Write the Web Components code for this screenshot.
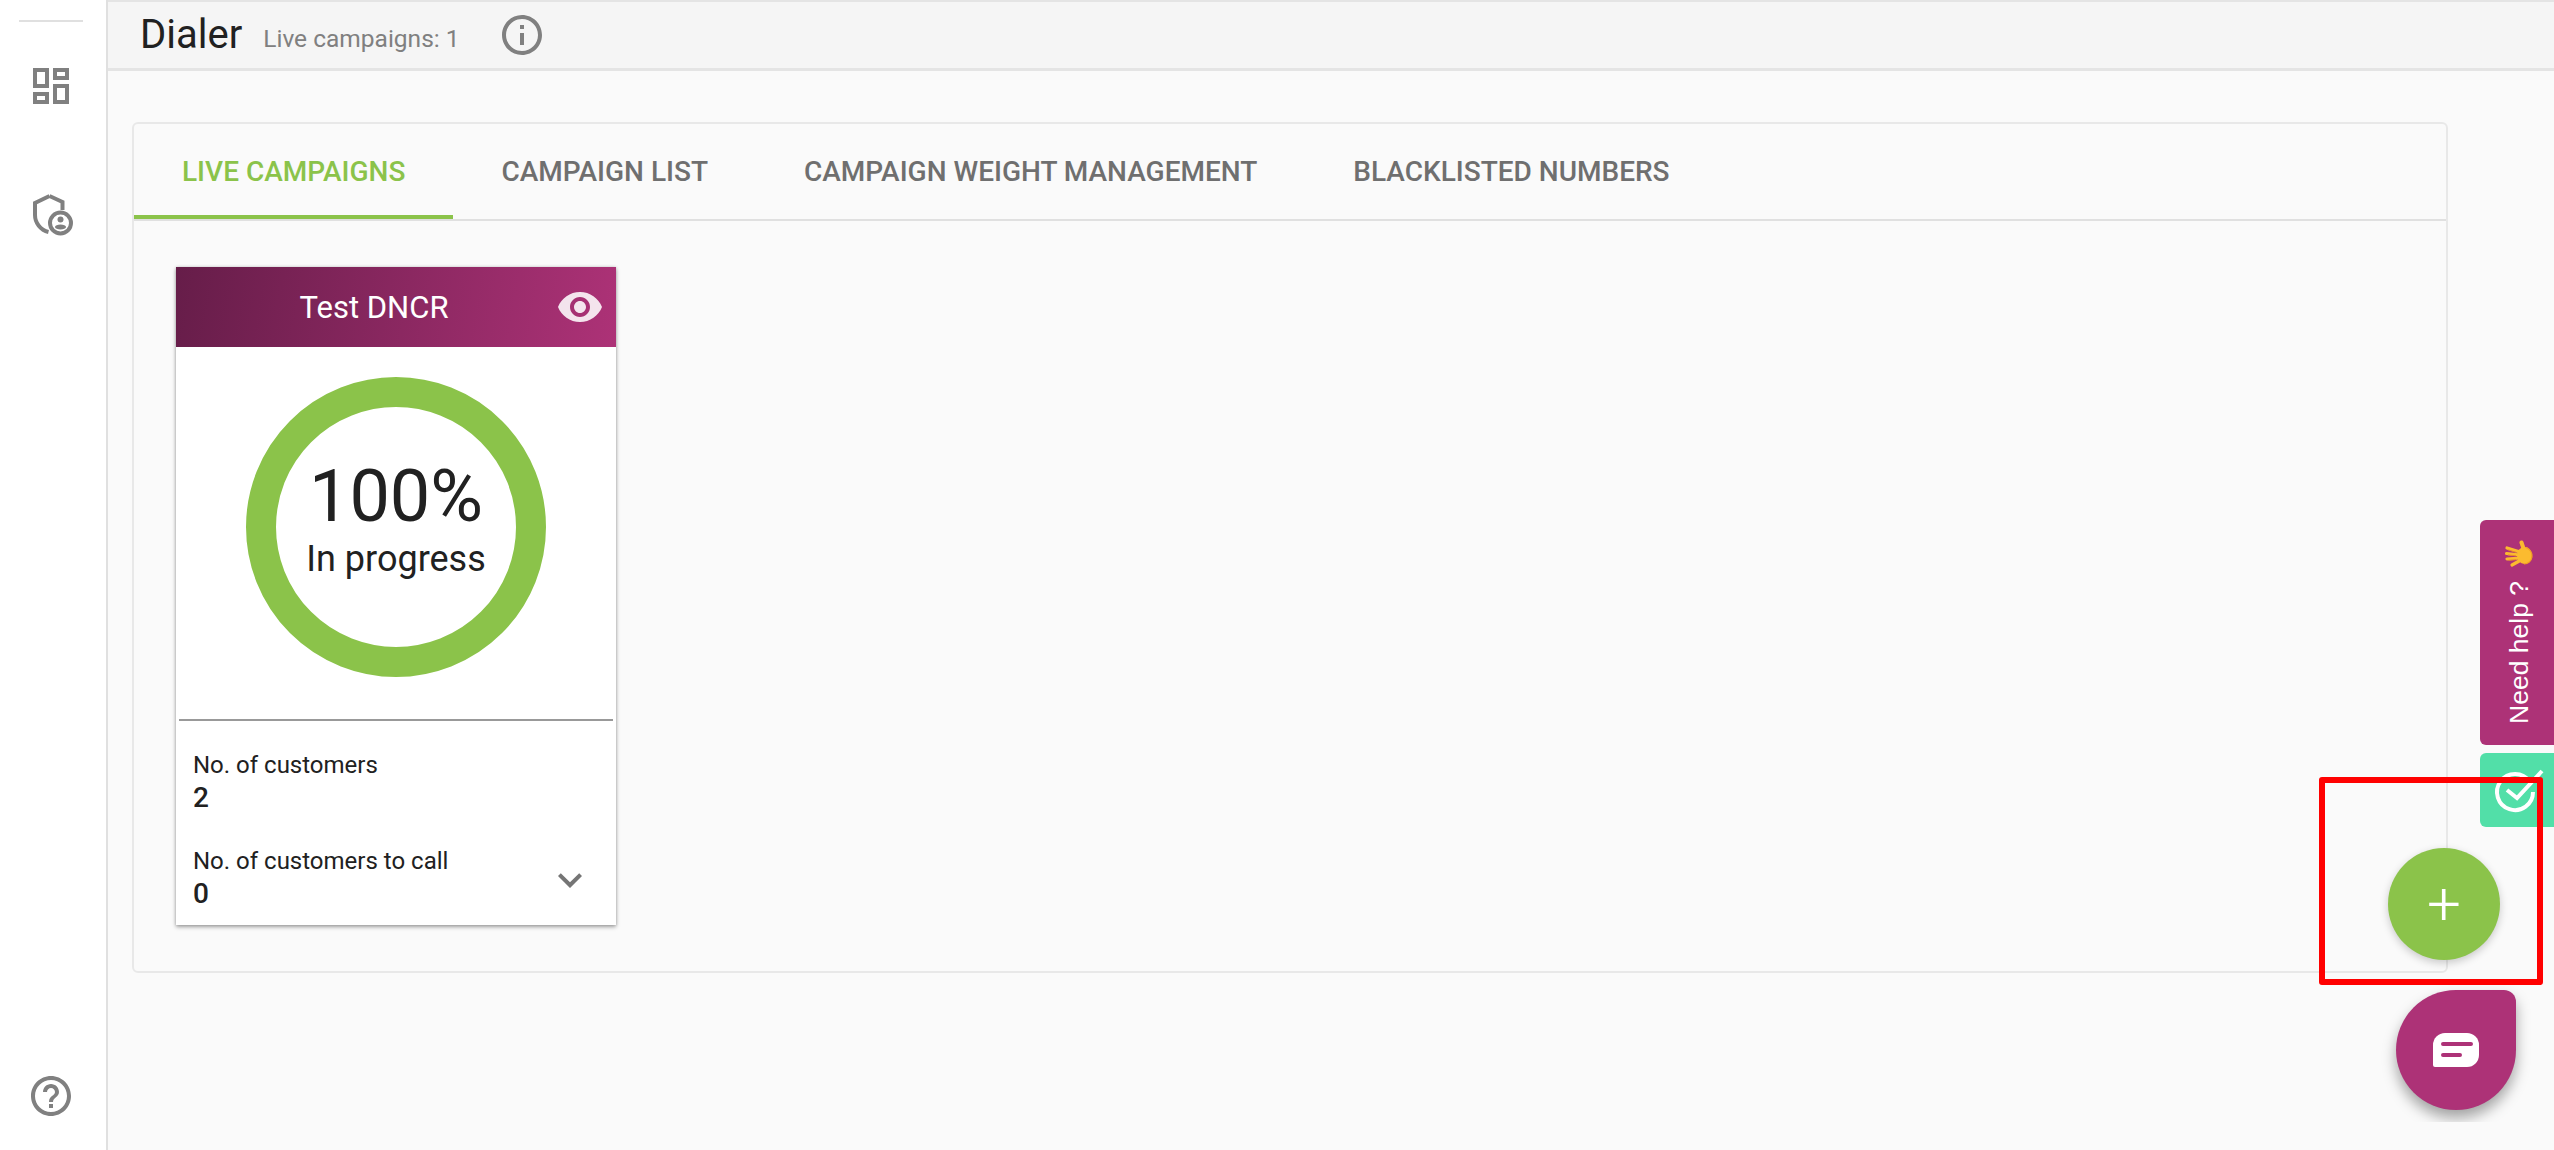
<!DOCTYPE html>
<html>
<head>
<meta charset="utf-8">
<title>Dialer</title>
<style>
  html, body { margin: 0; height: 100%; overflow: hidden; background: #fafafa; font-family: Roboto, sans-serif; color: #212121; }
  body { display: flex; width: 2554px; height: 1150px; }
  .main { flex: 1; display: flex; flex-direction: column; min-width: 0; }
</style>
</head>
<body>
<side-nav></side-nav>
<div class="main">
  <page-header title="Dialer" sub="Live campaigns: 1"></page-header>
  <tab-panel>
    <tab-item slot="title" selected>LIVE CAMPAIGNS</tab-item>
    <tab-item slot="title">CAMPAIGN LIST</tab-item>
    <tab-item slot="title">CAMPAIGN WEIGHT MANAGEMENT</tab-item>
    <tab-item slot="title">BLACKLISTED NUMBERS</tab-item>
    <campaign-card name="Test DNCR" percent="100%" status="In progress">
      <card-stat label="No. of customers" value="2"></card-stat>
      <card-stat label="No. of customers to call" value="0" expandable></card-stat>
    </campaign-card>
  </tab-panel>
</div>
<help-tabs></help-tabs>
<mark-box></mark-box>
<add-fab></add-fab>
<chat-bubble></chat-bubble>

<script>
(function() {
  'use strict';

  customElements.define('side-nav', class extends HTMLElement {
    constructor() {
      super();
      this.attachShadow({mode: 'open'}).innerHTML = `
        <style>
          :host { display: flex; flex-direction: column; align-items: center; box-sizing: border-box; width: 108px; height: 1150px; padding: 20px 4px 0 0; background: #fff; border-right: 2px solid #e0e0e0; flex: none; }
          hr { width: 64px; height: 2px; margin: 0; border: 0; background: #e0e0e0; }
          svg { display: block; width: 48px; height: 48px; fill: #808080; }
          .dash { margin-top: 40px; }
          .shield { margin-top: 80px; transform: translateX(-1.5px); }
          .help { margin-top: auto; margin-bottom: 30px; }
        </style>
        <hr>
        <svg class="dash" viewBox="0 0 24 24"><path d="M19 5v2h-4V5h4M9 5v6H5V5h4m10 8v6h-4v-6h4M9 17v2H5v-2h4M21 3h-8v6h8V3zM11 3H3v10h8V3zm10 8h-8v10h8V11zm-10 4H3v6h8v-6z"/></svg>
        <svg class="shield" viewBox="0 0 48 48">
          <path d="M24 6 L9.5 13 V25 C9.5 33 15 40 23 42" fill="none" stroke="#808080" stroke-width="4"/>
          <path d="M24 6 L37 12 V20" fill="none" stroke="#808080" stroke-width="4"/>
          <circle cx="35" cy="33" r="10.5" fill="#fff" stroke="#808080" stroke-width="4"/>
          <circle cx="35" cy="29.5" r="3"/>
          <ellipse cx="35" cy="37" rx="5.5" ry="2.5"/>
        </svg>
        <svg class="help" viewBox="0 0 24 24"><path d="M11 18h2v-2h-2v2zm1-16C6.48 2 2 6.48 2 12s4.48 10 10 10 10-4.48 10-10S17.52 2 12 2zm0 18c-4.41 0-8-3.59-8-8s3.59-8 8-8 8 3.59 8 8-3.59 8-8 8zm0-14c-2.21 0-4 1.79-4 4h2c0-1.1.9-2 2-2s2 .9 2 2c0 2-3 1.75-3 5h2c0-2.25 3-2.5 3-5 0-2.21-1.79-4-4-4z"/></svg>
      `;
    }
  });

  customElements.define('page-header', class extends HTMLElement {
    constructor() {
      super();
      this.attachShadow({mode: 'open'}).innerHTML = `
        <style>
          :host { display: flex; align-items: center; box-sizing: border-box; height: 71px; padding: 0 0 0 32px; background: #f5f5f5; border-top: 2px solid #e4e4e4; border-bottom: 3px solid #e4e4e4; flex: none; }
          h1 { margin: 0; font: 400 40px/60px Roboto, sans-serif; color: #212121; }
          span { margin-left: 21px; padding-top: 8px; font: 400 24.5px/40px Roboto, sans-serif; color: #808080; }
          svg { width: 48px; height: 48px; margin-left: 38px; fill: #808080; }
        </style>
        <h1></h1><span></span>
        <svg viewBox="0 0 24 24"><path d="M11 7h2v2h-2zm0 4h2v6h-2zm1-9C6.48 2 2 6.48 2 12s4.48 10 10 10 10-4.48 10-10S17.52 2 12 2zm0 18c-4.41 0-8-3.59-8-8s3.59-8 8-8 8 3.59 8 8-3.59 8-8 8z"/></svg>
      `;
    }
    connectedCallback() {
      this.shadowRoot.querySelector('h1').textContent = this.getAttribute('title');
      this.shadowRoot.querySelector('span').textContent = this.getAttribute('sub');
      this.removeAttribute('title');
    }
  });

  customElements.define('tab-panel', class extends HTMLElement {
    constructor() {
      super();
      this.attachShadow({mode: 'open'}).innerHTML = `
        <style>
          :host { display: block; box-sizing: border-box; width: 2316px; margin: 51px 0 0 24px; background: #fafafa; border: 2px solid #e8e8e8; border-radius: 6px; }
          #tabs { display: flex; height: 97px; border-bottom: 2px solid #e0e0e0; box-sizing: border-box; }
          #panels { display: flex; padding: 46px 42px 46px; }
        </style>
        <div id="tabs"><slot name="title"></slot></div>
        <div id="panels"><slot></slot></div>
      `;
    }
  });

  customElements.define('tab-item', class extends HTMLElement {
    constructor() {
      super();
      this.attachShadow({mode: 'open'}).innerHTML = `
        <style>
          :host { display: flex; align-items: center; box-sizing: border-box; height: 95px; padding: 3px 48px 0; font: 500 28px Roboto, sans-serif; color: #6f6f6f; white-space: nowrap; border-bottom: 4px solid transparent; }
          :host([selected]) { color: #8bc34a; border-bottom-color: #8bc34a; }
        </style>
        <slot></slot>
      `;
    }
  });

  customElements.define('campaign-card', class extends HTMLElement {
    constructor() {
      super();
      this.attachShadow({mode: 'open'}).innerHTML = `
        <style>
          :host { display: block; width: 440px; background: #fff; box-shadow: 0 2px 4px rgba(0,0,0,.35), 0 0 3px rgba(0,0,0,.15); }
          .head { display: flex; align-items: center; height: 80px; padding-right: 12px; background: linear-gradient(100deg, #661d49, #ad3277); color: #fff; }
          .name { flex: 1; padding-left: 16px; text-align: center; font: 400 31px Roboto, sans-serif; }
          .head svg { width: 48px; height: 48px; fill: rgba(255,255,255,.87); }
          .ring { display: grid; place-items: center; width: 300px; height: 300px; margin: 30px auto 0; }
          .ring svg, .ring > div { grid-area: 1 / 1; }
          .ring svg { width: 300px; height: 300px; }
          .ring > div { text-align: center; color: #212121; padding-bottom: 15.5px; }
          .pct { font: 400 72px/70px Roboto, sans-serif; }
          .status { margin-top: 9.5px; font: 400 36px/36px Roboto, sans-serif; }
          hr { height: 2px; margin: 42px 3px 0; border: 0; background: #999; }
          .stats { padding: 28px 0 15px 17px; display: flex; flex-direction: column; gap: 31px; }
        </style>
        <div class="head"><div class="name"></div>
          <svg viewBox="0 0 24 24"><path d="M12 4.5C7 4.5 2.73 7.61 1 12c1.73 4.39 6 7.5 11 7.5s9.27-3.11 11-7.5c-1.73-4.39-6-7.5-11-7.5zM12 17c-2.76 0-5-2.24-5-5s2.24-5 5-5 5 2.24 5 5-2.24 5-5 5zm0-8c-1.66 0-3 1.34-3 3s1.34 3 3 3 3-1.34 3-3-1.34-3-3-3z"/></svg>
        </div>
        <div class="ring">
          <svg viewBox="0 0 300 300"><circle cx="150" cy="150" r="135" fill="none" stroke="#8bc34a" stroke-width="30"/></svg>
          <div><div class="pct"></div><div class="status"></div></div>
        </div>
        <hr>
        <div class="stats"><slot></slot></div>
      `;
    }
    connectedCallback() {
      const root = this.shadowRoot;
      root.querySelector('.name').textContent = this.getAttribute('name');
      root.querySelector('.pct').textContent = this.getAttribute('percent');
      root.querySelector('.status').textContent = this.getAttribute('status');
    }
  });

  customElements.define('card-stat', class extends HTMLElement {
    constructor() {
      super();
      this.attachShadow({mode: 'open'}).innerHTML = `
        <style>
          :host { display: flex; align-items: center; justify-content: space-between; padding-right: 22px; }
          .label { font: 400 24px/32px Roboto, sans-serif; color: #212121; }
          .value { font: 500 28px/33px Roboto, sans-serif; color: #212121; }
          svg { display: none; width: 48px; height: 48px; fill: #757575; margin-top: 4px; }
          :host([expandable]) svg { display: block; }
        </style>
        <div><div class="label"></div><div class="value"></div></div>
        <svg viewBox="0 0 24 24"><path d="M16.59 8.59L12 13.17 7.41 8.59 6 10l6 6 6-6z"/></svg>
      `;
    }
    connectedCallback() {
      this.shadowRoot.querySelector('.label').textContent = this.getAttribute('label');
      this.shadowRoot.querySelector('.value').textContent = this.getAttribute('value');
    }
  });

  customElements.define('help-tabs', class extends HTMLElement {
    constructor() {
      super();
      this.attachShadow({mode: 'open'}).innerHTML = `
        <style>
          :host { position: absolute; left: 2480px; top: 520px; width: 74px; display: flex; flex-direction: column; gap: 8px; }
          .help { display: flex; flex-direction: column; align-items: center; box-sizing: border-box; height: 225px; padding: 20px 0 0 0; background: #ad3277; border-radius: 6px 0 0 6px; }
          .help svg { width: 28px; height: 28px; margin-left: 3px; }
          .help span { writing-mode: vertical-rl; transform: rotate(180deg); margin: 13px 0 0 3px; font: 400 26.5px/30px "Liberation Sans", Arial, sans-serif; color: #fff; white-space: nowrap; }
          .check { display: flex; align-items: center; height: 74px; padding-left: 13px; background: #52dfa8; border-radius: 6px 0 0 6px; overflow: hidden; }
          .check svg { width: 48px; height: 48px; overflow: visible; }
        </style>
        <div class="help">
          <svg viewBox="0 0 28 28">
            <g stroke="#fbbb2f" stroke-width="3.2" stroke-linecap="round" fill="none">
              <path d="M2 8 L15 12"/><path d="M1.6 13.5 L15 15"/><path d="M2 19 L15 18"/><path d="M7 25 L16 20"/>
              <path d="M16.5 2.5 L19 10" stroke-width="4"/>
            </g>
            <path d="M3 9.8 L11 12.3 M3 15 L11 15.8 M3.4 20.3 L11 19.7" stroke="#e98a2c" stroke-width="1" fill="none"/>
            <ellipse cx="19.5" cy="15.5" rx="7.5" ry="8.5" fill="#fbbb2f"/>
            <path d="M21 7.4 C25 9 27.5 13 27 17 C26.5 21 23 24 19 24" fill="none" stroke="#f2a024" stroke-width="1.2"/>
          </svg>
          <span>Need help ?</span>
        </div>
        <div class="check">
          <svg viewBox="0 0 48 48" fill="none" stroke="#fff" stroke-width="4">
            <path d="M36.7 15.7 A18 18 0 1 0 40 26"/>
            <path d="M14 24 L24 32 L49 5"/>
          </svg>
        </div>
      `;
    }
  });

  customElements.define('mark-box', class extends HTMLElement {
    constructor() {
      super();
      this.attachShadow({mode: 'open'}).innerHTML = `
        <style>
          :host { position: absolute; left: 2319px; top: 777px; box-sizing: border-box; width: 224px; height: 208px; border: 6px solid #f00; border-radius: 3px; }
        </style>
      `;
    }
  });

  customElements.define('add-fab', class extends HTMLElement {
    constructor() {
      super();
      this.attachShadow({mode: 'open'}).innerHTML = `
        <style>
          :host { position: absolute; left: 2388px; top: 848px; display: flex; align-items: center; justify-content: center; width: 112px; height: 112px; border-radius: 50%; background: #8bc34a; color: #fff; font: 300 60px/1 Roboto, sans-serif; box-shadow: 0 3px 8px rgba(0,0,0,.2); }
        </style>
        +
      `;
    }
  });

  customElements.define('chat-bubble', class extends HTMLElement {
    constructor() {
      super();
      this.attachShadow({mode: 'open'}).innerHTML = `
        <style>
          :host { position: absolute; left: 2366px; top: 960px; box-sizing: border-box; width: 180px; height: 162px; padding: 30px; overflow: hidden; }
          div { display: flex; align-items: center; justify-content: center; width: 120px; height: 120px; background: #ad3277; border-radius: 50% 12px 50% 50%; box-shadow: 0 8px 14px rgba(0,0,0,.35); }
          svg { width: 46px; height: 34px; }
        </style>
        <div>
          <svg viewBox="0 0 46 34">
            <path d="M12 0 H34 A12 12 0 0 1 46 12 V22 A12 12 0 0 1 34 34 H2 A2 2 0 0 1 0 32 V12 A12 12 0 0 1 12 0 Z" fill="#fff"/>
            <path d="M10 11 H38 M10 22 H27" stroke="#ad3277" stroke-width="4" stroke-linecap="round"/>
          </svg>
        </div>
      `;
    }
  });
})();
</script>
</body>
</html>
